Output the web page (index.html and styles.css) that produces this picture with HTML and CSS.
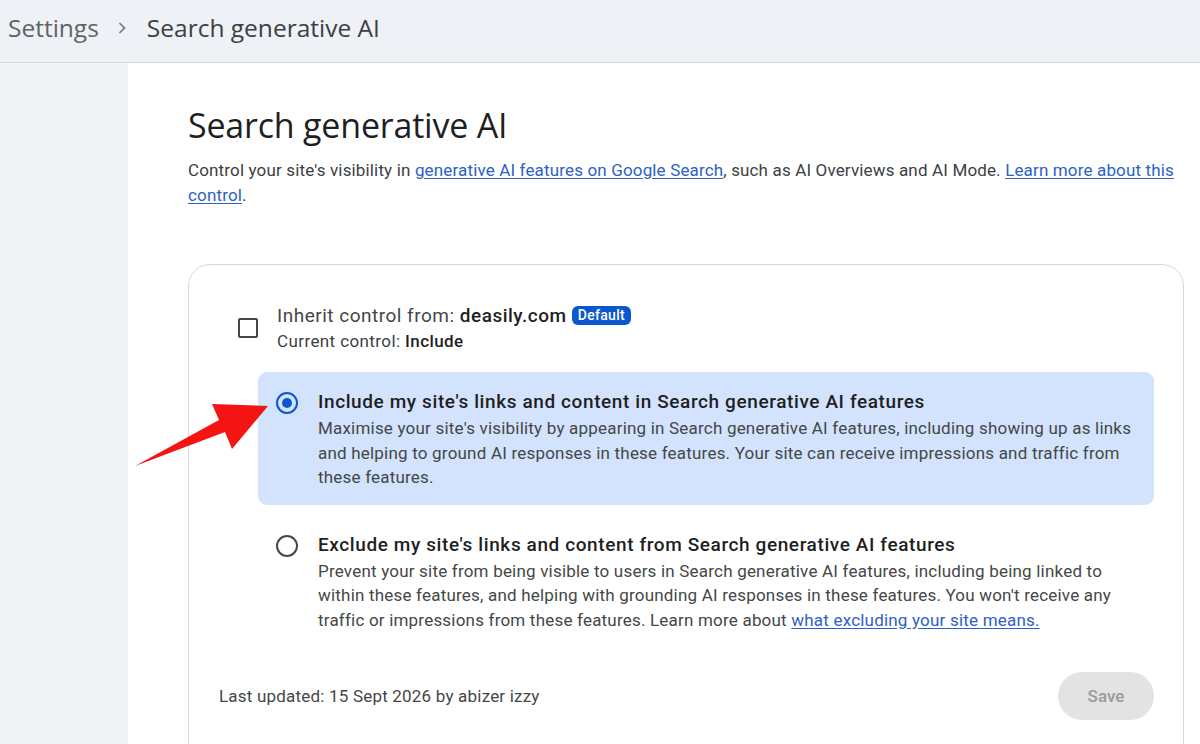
FILE: index.html
```html
<!DOCTYPE html>
<html lang="en">
<head>
    <meta charset="UTF-8">
    <meta name="viewport" content="width=device-width, initial-scale=1.0">
    <title>Search generative AI</title>
    <link rel="stylesheet" href="styles.css">
</head>
<body>
    <div class="topbar">
        <span class="crumb">Settings</span>
        <svg class="crumb-sep" width="10" height="14" viewBox="0 0 10 14">
            <path d="M2.5 2 L7.5 7 L2.5 12" fill="none" stroke="#70757a" stroke-width="1.6"/>
        </svg>
        <span class="crumb-current">Search generative AI</span>
    </div>

    <div class="layout">
        <div class="sidebar"></div>

        <div class="main">
            <h1 class="page-title">Search generative AI</h1>
            <p class="intro">Control your site's visibility in <a href="#">generative AI features on Google Search</a>, such as AI Overviews and AI Mode. <a href="#">Learn more about this control</a>.</p>

            <div class="card">
                <div class="inherit">
                    <span class="checkbox"></span>
                    <div>
                        <div class="inherit-title">Inherit control from: <b>deasily.com</b> <span class="badge">Default</span></div>
                        <div class="inherit-sub">Current control: <b>Include</b></div>
                    </div>
                </div>

                <div class="options">
                    <div class="option selected">
                        <span class="radio"></span>
                        <div>
                            <div class="option-title">Include my site's links and content in Search generative AI features</div>
                            <div class="option-desc">Maximise your site's visibility by appearing in Search generative AI features, including showing up as links and helping to ground AI responses in these features. Your site can receive impressions and traffic from these features.</div>
                        </div>
                    </div>
                    <div class="option">
                        <span class="radio"></span>
                        <div>
                            <div class="option-title">Exclude my site's links and content from Search generative AI features</div>
                            <div class="option-desc">Prevent your site from being visible to users in Search generative AI features, including being linked to within these features, and helping with grounding AI responses in these features. You won't receive any traffic or impressions from these features. Learn more about <a href="#">what excluding your site means.</a></div>
                        </div>
                    </div>
                </div>

                <div class="card-footer">
                    <span class="updated">Last updated: 15 Sept 2026 by abizer izzy</span>
                    <button class="save-button" disabled>Save</button>
                </div>
            </div>
        </div>
    </div>

    <!-- annotation arrow -->
    <svg class="arrow" width="150" height="80" viewBox="130 395 150 80">
        <polygon points="135,466 219,420 212,404 268,406 232,449 225,432" fill="#f41414"/>
    </svg>
</body>
</html>
```

FILE: styles.css
```css
body {
    margin: 0;
    font-family: Roboto, "Noto Sans", Arial, sans-serif;
    color: #444746;
    background: #fff;
}
.topbar {
    height: 63px;
    display: flex;
    align-items: center;
    padding-left: 8px;
    padding-bottom: 8px;
    box-sizing: border-box;
    background-color: #eef1f5;
    border-bottom: 1px solid #d3d6da;
    font-family: "Open Sans", Roboto, sans-serif;
    font-size: 24.5px;
}
.crumb {
    color: #5f6368;
}
.crumb-sep {
    margin: 2px 20px 0 18px;
}
.crumb-current {
    color: #3c4043;
}
.layout {
    display: flex;
    min-height: 680px;
}
.sidebar {
    width: 128px;
    flex-shrink: 0;
    background-color: #f1f3f6;
}
.main {
    flex: 1;
    padding: 40px 16px 0 60px;
}
.page-title {
    margin: 0;
    font-family: "Open Sans", Roboto, sans-serif;
    font-weight: 400;
    font-size: 34px;
    line-height: 44px;
    color: #1f1f1f;
    letter-spacing: -0.2px;
}
.intro {
    margin: 11px 0 0;
    font-size: 17px;
    line-height: 24.5px;
    letter-spacing: 0.15px;
    color: #3c4043;
}
a {
    color: #2c62c4;
    text-decoration: underline;
    text-underline-offset: 2px;
}
.card {
    margin-top: 57px;
    border: 1px solid #d6d8db;
    border-radius: 22px;
    padding: 38px 29px 50px 30px;
}
.inherit {
    display: flex;
    align-items: center;
    gap: 19px;
    padding-left: 19px;
}
.checkbox {
    width: 16px;
    height: 16px;
    border: 2px solid #444746;
    border-radius: 2px;
    flex-shrink: 0;
}
.inherit-title {
    font-size: 19px;
    line-height: 26px;
    letter-spacing: 0.5px;
    color: #444746;
}
.inherit-title b {
    font-weight: 500;
    color: #1f1f1f;
}
.badge {
    display: inline-block;
    background-color: #0b57d0;
    color: #fff;
    font-size: 14px;
    font-weight: 500;
    line-height: 19px;
    letter-spacing: 0.3px;
    padding: 0 6px;
    border-radius: 6px;
    vertical-align: 2px;
}
.inherit-sub {
    font-size: 17px;
    line-height: 24px;
    letter-spacing: 0.4px;
    color: #3c4043;
}
.inherit-sub b {
    font-weight: 500;
    color: #1f1f1f;
}
.options {
    margin: 19px 0 0 39px;
    display: flex;
    flex-direction: column;
    gap: 10px;
}
.option {
    display: flex;
    gap: 20px;
    padding: 16px 20px 15px 18px;
    border-radius: 9px;
}
.option.selected {
    background-color: #d3e3fd;
}
.radio {
    width: 18px;
    height: 18px;
    margin-top: 4px;
    border: 2px solid #444746;
    border-radius: 50%;
    flex-shrink: 0;
    position: relative;
}
.option.selected .radio {
    border-color: #0b57d0;
}
.option.selected .radio::after {
    content: "";
    position: absolute;
    left: 4px;
    top: 4px;
    width: 10px;
    height: 10px;
    border-radius: 50%;
    background-color: #0b57d0;
}
.option-title {
    font-size: 19px;
    font-weight: 500;
    line-height: 28px;
    color: #1f1f1f;
    letter-spacing: 0.6px;
}
.option-desc {
    font-size: 17px;
    line-height: 24.5px;
    color: #444746;
    letter-spacing: 0.2px;
}
.card-footer {
    display: flex;
    justify-content: space-between;
    align-items: center;
    margin-top: 25px;
}
.updated {
    font-size: 17px;
    letter-spacing: 0.2px;
    color: #444746;
}
.save-button {
    width: 96px;
    height: 48px;
    border: none;
    border-radius: 24px;
    background-color: #e3e3e3;
    color: #9a9a9a;
    font-family: Roboto, sans-serif;
    font-size: 17px;
    font-weight: 500;
}
.arrow {
    position: absolute;
    left: 130px;
    top: 395px;
}
```
